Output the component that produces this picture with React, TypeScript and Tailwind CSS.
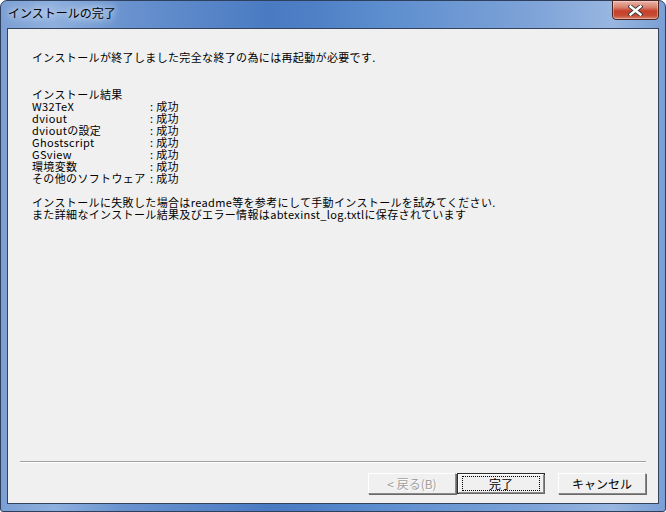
import React from "react";

const results = [
  "W32TeX",
  "dviout",
  "dvioutの設定",
  "Ghostscript",
  "GSview",
  "環境変数",
  "その他のソフトウェア",
];

const jp = "font-['MS_UI_Gothic','Noto_Sans_CJK_JP',sans-serif]";

function CloseButton() {
  return (
    <div className="w-[47px] h-[20px] -mt-[1px] rounded-b-[4px] border border-[#4b2622] bg-[linear-gradient(180deg,#e9b4a8_0%,#d9826f_35%,#c6412c_55%,#c84a33_80%,#d9826c_100%)] flex items-center justify-center shadow-[inset_0_0_0_1px_rgba(255,255,255,0.35)]">
      <svg width="15" height="11" viewBox="0 0 15 11">
        <path d="M2.5 1.5 L12.5 9.5 M12.5 1.5 L2.5 9.5" stroke="#3a3a3a" strokeWidth="4.2" strokeLinecap="square" />
        <path d="M2.5 1.5 L12.5 9.5 M12.5 1.5 L2.5 9.5" stroke="#ffffff" strokeWidth="2.4" strokeLinecap="square" />
      </svg>
    </div>
  );
}

function Button({ label, disabled, isDefault }: { label: string; disabled?: boolean; isDefault?: boolean }) {
  return (
    <div
      className={`w-[88px] h-[21px] bg-[#f0f0f0] ${
        isDefault ? "border border-[#2b2b2b] p-0" : ""
      }`}
    >
      <div className="w-full h-full border-t border-l border-white border-r border-b border-r-[#8a8a8a] border-b-[#8a8a8a] shadow-[1px_1px_0_#696969] flex items-center justify-center">
        <div
          className={`flex items-center justify-center text-[12px] leading-[12px] ${jp} ${
            disabled ? "text-[#a0a0a0] [text-shadow:1px_1px_0_#ffffff]" : "text-black"
          } ${isDefault ? "w-[76px] h-[13px] outline outline-1 outline-dotted outline-black" : ""}`}
        >
          {label}
        </div>
      </div>
    </div>
  );
}

export default function App() {
  return (
    <div className="w-[666px] h-[512px] rounded-t-[7px] rounded-b-[3px] border border-[#2f3f5e] bg-[linear-gradient(90deg,#7b9fd4_0%,#8eb0de_8%,#6a93cf_18%,#4a7bc2_40%,#4f80c6_47%,#5d8ece_58%,#7ea3d8_80%,#98b6e0_92%,#7a9fd5_100%)] flex flex-col px-[6px] pb-[7px]">
      {/* Title bar */}
      <div className="h-[27px] flex justify-between items-start shrink-0">
        <div className="pl-[1px] pt-[6px] text-[12px] leading-[12px] text-black font-['Noto_Sans_CJK_JP',sans-serif] [text-shadow:0_0_6px_#ffffff,0_0_12px_#ffffff]">
          インストールの完了
        </div>
        <CloseButton />
      </div>

      {/* Client area */}
      <div className="flex-1 border border-[#33425e] bg-[#f0f0f0] flex flex-col">
        <div className={`flex-1 pl-[24px] pt-[22px] text-[11px] leading-[12px] tracking-[0.35px] text-black ${jp}`}>
          <p>インストールが終了しました完全な終了の為には再起動が必要です.</p>
          <p className="mt-[25px]">インストール結果</p>
          {results.map((r) => (
            <div key={r} className="flex">
              <span className="w-[118px]">{r}</span>
              <span>: 成功</span>
            </div>
          ))}
          <p className="mt-[12px]">インストールに失敗した場合はreadme等を参考にして手動インストールを試みてください.</p>
          <p>また詳細なインストール結果及びエラー情報はabtexinst_log.txtlに保存されています</p>
        </div>

        <div className="mx-[12px] h-[2px] border-t border-[#a0a0a0] border-b border-b-white" />

        <div className="flex justify-end gap-[1px] pt-[10px] pb-[9px] pr-[12px]">
          <Button label="< 戻る(B)" disabled />
          <Button label="完了" isDefault />
          <div className="w-[11px]" />
          <Button label="キャンセル" />
        </div>
      </div>
    </div>
  );
}
